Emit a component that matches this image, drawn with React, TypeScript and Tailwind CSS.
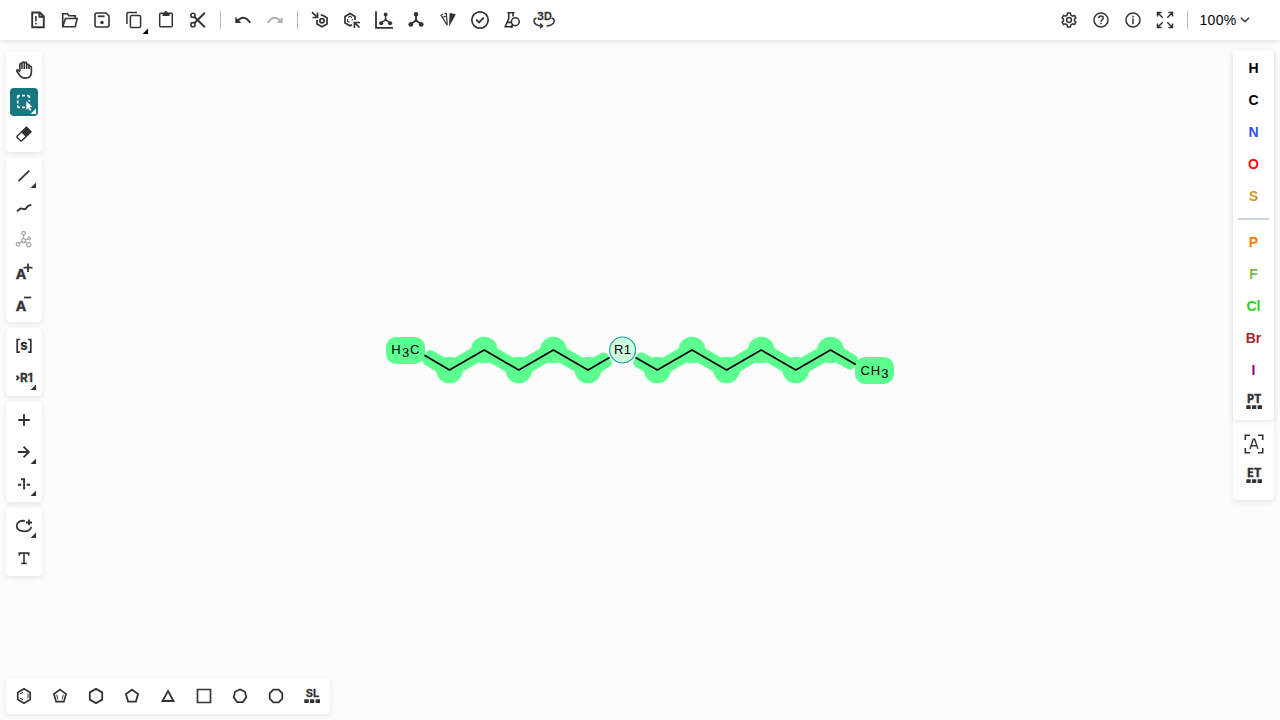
import React from "react";

const ink = "#333333";

function Icon({ children, size = 24, w = 1.6, color = ink }: { children: React.ReactNode; size?: number; w?: number; color?: string }) {
  return (
    <svg width={size} height={size} viewBox="0 0 24 24" fill="none" stroke={color} strokeWidth={w} className="block shrink-0 overflow-visible">
      {children}
    </svg>
  );
}

function Glyph({ x, y, size, children, weight = 700, font = "Inter, sans-serif", length }: { x: number; y: number; size: number; children: string; weight?: number; font?: string; length?: number }) {
  return (
    <text x={x} y={y} fontSize={size} fontWeight={weight} fontFamily={font} textAnchor="middle" fill={ink} stroke={ink} strokeWidth="0.3" textLength={length} lengthAdjust="spacingAndGlyphs">
      {children}
    </text>
  );
}

function Tool({ children, more, active, label }: { children: React.ReactNode; more?: "dark" | "light" | "black"; active?: boolean; label: string }) {
  return (
    <button aria-label={label} className={`relative flex size-7 shrink-0 items-center justify-center rounded-[4px] ${active ? "bg-[#167782]" : ""}`}>
      {children}
      {more && (
        <svg width="6" height="6" viewBox="0 0 6 6" className={more === "black" ? "absolute right-0 bottom-0" : "absolute right-[2px] bottom-[2px]"}>
          <path d="M6 .5V6H.5Z" fill={more === "light" ? "#fff" : more === "black" ? "#000" : ink} />
        </svg>
      )}
    </button>
  );
}

function Panel({ children, className = "" }: { children: React.ReactNode; className?: string }) {
  return <div className={`flex rounded-[4px] bg-white p-1 shadow-[0_2px_5px_rgba(103,104,132,0.15)] ${className}`}>{children}</div>;
}

const Sep = () => <div className="h-[18px] w-px bg-[#b4b9d6]" />;

const Molecule = () => (
  <>
    <path d="M12 6V12.5L6 16.5M12 12.5L18 16.5" strokeWidth="1.8" />
    <g fill={ink} stroke="none">
      <circle cx="12" cy="6.2" r="2.2" />
      <circle cx="6.8" cy="16.4" r="2.4" />
      <circle cx="17.2" cy="16.4" r="2.4" />
      <circle cx="12" cy="12.6" r="1.3" />
    </g>
  </>
);

const Dots = () => <path d="M4.3 15.2H8.7V19H4.3ZM9.9 15.2H14.3V19H9.9ZM15.6 15.2H20V19H15.6Z" fill={ink} stroke="none" />;

function TopBar() {
  return (
    <header className="relative z-10 flex h-10 shrink-0 items-center bg-white pl-6 shadow-[0_2px_5px_rgba(103,104,132,0.15)]">
      <div className="flex gap-1">
        <Tool label="New"><Icon w={1.9}><path d="M6.2 4.5H13.8L17.8 8.3V19.2H6.2ZM13.4 4.7V8.8H17.6" /><path d="M9.9 8V13.3M9.9 14.7V16.5" strokeWidth="1.6" /></Icon></Tool>
        <Tool label="Open"><Icon><path d="M4.7 18.5V5.8H9.5L11 7.7H17.2V10.5M4.8 18.8L7.4 10.5H19.2L17.2 18.8Z" /></Icon></Tool>
        <Tool label="Save"><Icon><path d="M5 7Q5 5 7 5H16L19 8V17Q19 19 17 19H7Q5 19 5 17Z" /><path d="M7.8 8.3H14.5" strokeWidth="1.8" /><circle cx="12" cy="14.5" r="1.7" fill={ink} stroke="none" /></Icon></Tool>
        <Tool label="Copy" more="black"><Icon w={1.5}><rect x="8.4" y="7.6" width="10.2" height="12" rx="1.4" /><path d="M4.9 16V6Q4.9 4.6 6.3 4.6H15" /></Icon></Tool>
        <Tool label="Paste"><Icon w={1.5}><rect x="5.7" y="5.3" width="12.6" height="13.5" rx="1" /><path d="M8.5 5H10.3Q10.3 3 12 3Q13.7 3 13.7 5H15.5V8H8.5Z" fill={ink} stroke="none" /></Icon></Tool>
        <Tool label="Cut"><Icon><circle cx="7" cy="7.3" r="2.1" /><circle cx="7" cy="16.7" r="2.1" /><path d="M8.5 9L18.9 19.2M8.5 15L18.9 4.8" strokeWidth="1.9" /></Icon></Tool>
      </div>
      <div className="ml-2 mr-2"><Sep /></div>
      <div className="flex gap-1">
        <Tool label="Undo"><Icon><path d="M5.5 14Q12.8 5.2 19.2 14.8" strokeWidth="1.9" /><path d="M4.3 8.7V15H10.4Z" fill={ink} stroke="none" /></Icon></Tool>
        <Tool label="Redo"><Icon color="#b0b0b0"><path d="M18.5 14Q11.2 5.2 4.8 14.8" strokeWidth="1.9" /><path d="M19.7 8.7V15H13.6Z" fill="#b0b0b0" stroke="none" /></Icon></Tool>
      </div>
      <div className="ml-2 mr-2"><Sep /></div>
      <div className="flex gap-1">
        <Tool label="Aromatize"><Icon w={1.7}><path d="M12.8 7.6L14 7L19 9.8V15.9L14 18.7L9 15.9V12" /><circle cx="14" cy="12.8" r="2.1" /><path d="M4 4.2L9 9M9.5 4.5V9.5H4.6" /></Icon></Tool>
        <Tool label="Dearomatize"><Icon w={1.7}><path d="M12 16.8L10 17.8L5 15V8.4L10 5.5L15 8.4V12" /><path d="M8 9.5L10 8.3L12 9.5M7.5 11V13.2L9.5 14.5M12.3 11V12.5" strokeWidth="1.1" /><path d="M19.5 19.5L14.8 14.8M14.4 20V14.5H20" /></Icon></Tool>
        <Tool label="Layout"><Icon><path d="M4 3.3V19.8H21" strokeWidth="1.8" /><g transform="translate(3.3 1.1) scale(.86)"><Molecule /></g></Icon></Tool>
        <Tool label="Clean Up"><Icon><Molecule /></Icon></Tool>
        <Tool label="Calculate CIP"><Icon><path d="M13 18.8L19.8 6.6Q17 5 13.6 5Z" fill={ink} stroke="none" /><path d="M11.2 17.2L5 7.2L7 6.2M8.5 5.6L10.4 5.4L11.2 17.2M6.6 9.2L10.5 8" strokeWidth="1.2" /></Icon></Tool>
        <Tool label="Check"><Icon><circle cx="12" cy="12" r="8.2" strokeWidth="1.7" /><path d="M8.2 11.7L11 14.4L15.8 9.6" strokeWidth="1.8" /></Icon></Tool>
        <Tool label="Calculated Values"><Icon><path d="M7.3 4.7H14.5M8.8 5V10.4L5.2 18.8H13M13 5V8.6M7.4 14.4H11" /><circle cx="15.3" cy="13.7" r="3.9" /><path d="M12.8 17L10.6 19.5" strokeWidth="2" /></Icon></Tool>
        <Tool label="3D Viewer"><Icon w={1.5}><Glyph x={12.4} y={12.3} size={10.7} length={14.8} weight={600}>3D</Glyph><path d="M4.5 10Q1.8 11 2 13.3Q2.7 17.5 10 18M19.7 10Q22.5 11 22.2 13.3Q21.3 17.2 14.5 18" strokeDasharray="30 1" /><path d="M8.2 15.6L10.6 18L8 20.3" /></Icon></Tool>
      </div>
      <div className="ml-auto flex items-center gap-1">
        <Tool label="Settings"><Icon w={1.5}><path d="M10.6 5.1H13.4L13.8 7.1L15.6 8.1L17.5 7.5L18.9 9.9L17.5 11.1V12.9L18.9 14.1L17.5 16.5L15.6 15.9L13.8 16.9L13.4 18.9H10.6L10.2 16.9L8.4 15.9L6.5 16.5L5.1 14.1L6.5 12.9V11.1L5.1 9.9L6.5 7.5L8.4 8.1L10.2 7.1Z" /><circle cx="12" cy="12" r="2.4" /></Icon></Tool>
        <Tool label="Help"><Icon w={1.5}><circle cx="12" cy="12" r="7" /><path d="M9.8 10.3Q9.8 8 12 8Q14.2 8 14.2 10Q14.2 11.2 13 11.9Q12 12.5 12 13.8M12 14.8V16.2" /></Icon></Tool>
        <Tool label="About"><Icon w={1.5}><circle cx="12" cy="12" r="7" /><path d="M12 10.4V16.2M12 7.8V9.4" /></Icon></Tool>
        <Tool label="Fullscreen"><Icon w={1.5}><path d="M9.7 9.7L4.8 4.8M14.3 9.7L19.2 4.8M9.7 14.3L4.8 19.2M14.3 14.3L19.2 19.2M4.5 8.6V4.5H8.6M15.4 4.5H19.5V8.6M4.5 15.4V19.5H8.6M15.4 19.5H19.5V15.4" /></Icon></Tool>
      </div>
      <div className="ml-2"><Sep /></div>
      <button className="ml-[11px] flex w-[81px] items-center gap-[3px] font-['Liberation_Sans',sans-serif] text-[14px] text-black">
        <span className="whitespace-nowrap pl-[0.5px] tracking-[0.3px]">100%</span>
        <svg width="10" height="6" viewBox="0 0 10 6" fill="none" stroke={ink} strokeWidth="1.4"><path d="M.9 .7L5 4.8L9.1 .7" /></svg>
      </button>
    </header>
  );
}

function LeftTools() {
  return (
    <aside className="flex w-9 flex-col gap-1.5">
      <Panel className="flex-col gap-1">
        <Tool label="Hand"><Icon><path d="M7.8 13V6.6Q7.8 5.5 8.9 5.5Q9.9 5.5 9.9 6.6V11M9.9 11V5.4Q9.9 4.1 11.1 4.1Q12.3 4.1 12.3 5.4V11M12.3 11V5.5Q12.3 4.4 13.4 4.4Q14.7 4.4 14.7 5.6V11M14.7 11V7.3Q14.7 6.2 15.8 6.2Q17 6.2 17 7.3V11M17 8.6Q19.4 7.6 19.4 9.5V14Q19.3 20.1 13.5 20.1Q9.8 20.1 7.8 17.4L4.9 13.3Q4.5 12.5 5.2 11.9Q6 11.4 7.8 14" /></Icon></Tool>
        <Tool label="Select" active more="light"><Icon color="#fff"><path d="M5.7 8.4V6.7Q5.7 5.7 6.7 5.7H8M10 5.7H13M15 5.7H16.2Q17.3 5.7 17.3 6.7V8M17.3 10V11.5M5.7 10.5V13.5M5.7 15.3V16.3Q5.7 17.3 6.7 17.3H8M10 17.3H13" strokeWidth="1.7" /><path d="M14.3 11.2V20L16.2 18L17.8 21L19.4 20L17.8 17.3L20.2 16.8Z" fill="#fff" stroke="none" /></Icon></Tool>
        <Tool label="Erase"><Icon><path d="M14.4 5.3L19 9.8L9.8 18.8H8.4L5 15.3V14.2Z" strokeWidth="1.4" strokeLinejoin="round" /><path d="M14.4 4.5L19.7 9.8L14.2 15.2L8.9 9.9Z" fill={ink} stroke="none" /></Icon></Tool>
      </Panel>
      <Panel className="flex-col gap-1">
        <Tool label="Bond" more="dark"><Icon w={1.7}><path d="M6.5 17.2L17.3 6.7" /></Icon></Tool>
        <Tool label="Chain"><Icon w={1.9}><path d="M5 15.3L8.5 12.4L13.2 13.2L16.2 9.8L19.3 8.9" /></Icon></Tool>
        <Tool label="Charge Pair"><Icon color="#aaa" w={1.3}><circle cx="11.6" cy="5" r="1.7" /><circle cx="11.6" cy="12.6" r="1.9" /><circle cx="6" cy="16.3" r="1.8" /><circle cx="16.7" cy="16.8" r="2.1" /><circle cx="17" cy="10.5" r="1.3" /><path d="M11.6 7V10.6M9.8 13.6L7.5 15M13.2 13.8L15 15.4M13.5 12L15.6 11" /></Icon></Tool>
        <Tool label="Charge Plus"><Icon><Glyph x={8.9} y={18.9} size={13.6} length={10} font="'Noto Sans', sans-serif">A</Glyph><path d="M16 3.5V12M11.5 7.7H20.5" strokeWidth="1.8" /></Icon></Tool>
        <Tool label="Charge Minus"><Icon><Glyph x={8.9} y={18.9} size={13.6} length={10} font="'Noto Sans', sans-serif">A</Glyph><path d="M12 5.5H19.3" strokeWidth="1.7" /></Icon></Tool>
      </Panel>
      <Panel className="flex-col gap-1">
        <Tool label="S-Group"><Icon w={1.7}><path d="M8 5.5H5.2V18.2H8M16 5.5H18.8V18.2H16" /><Glyph x={12} y={15.8} size={13}>s</Glyph></Icon></Tool>
        <Tool label="R-Group" more="dark"><Icon><path d="M4.4 9.6L6.7 11.8L4.4 14" strokeWidth="1.8" /><Glyph x={14.5} y={16.1} size={12} length={12.8}>R1</Glyph></Icon></Tool>
      </Panel>
      <Panel className="flex-col gap-1">
        <Tool label="Reaction Plus"><Icon w={1.9}><path d="M12 6.3V17.7M6.3 12H17.7" /></Icon></Tool>
        <Tool label="Reaction Arrow" more="dark"><Icon w={1.8}><path d="M5.8 12H16.7M11.5 6.6L16.9 12L11.5 17.4" /></Icon></Tool>
        <Tool label="Reaction Mapping" more="dark"><Icon w={1.9}><path d="M6 12.8H9.3M14.6 12.8H18M9 7.2H12.1V17.5" /></Icon></Tool>
      </Panel>
      <Panel className="flex-col gap-1">
        <Tool label="Shape" more="dark"><Icon w={1.8}><path d="M13 6.9C7.5 6.2 4.7 8.6 4.7 12C4.7 19 19.4 18.8 19.1 12.8M17 5.5V11.3M14 8.5H20" /></Icon></Tool>
        <Tool label="Text"><Icon><path d="M7.3 9.7V7.1H16.7V9.7M12 7.1V17.4M9.3 17.4H14.7" strokeWidth="1.6" /></Icon></Tool>
      </Panel>
    </aside>
  );
}

function Atom({ color, children }: { color: string; children: string }) {
  return (
    <button className={`flex size-7 shrink-0 items-center justify-center font-['Liberation_Sans',sans-serif] text-[14px] leading-none font-bold ${color}`}>
      {children}
    </button>
  );
}

function RightTools() {
  return (
    <aside className="ml-auto -mt-0.5 flex h-[450px] w-[41px] flex-col rounded-[4px] bg-white shadow-[0_2px_5px_rgba(103,104,132,0.15)]">
      <Panel className="h-[370px] flex-col items-center gap-1">
        <Atom color="text-black">H</Atom>
        <Atom color="text-black">C</Atom>
        <Atom color="text-[#304ff7]">N</Atom>
        <Atom color="text-[#ff0d0d]">O</Atom>
        <Atom color="text-[#c99a19]">S</Atom>
        <div className="my-1 h-0.5 w-[31px] shrink-0 bg-[#cad3dd]" />
        <Atom color="text-[#ff8000]">P</Atom>
        <Atom color="text-[#78bc42]">F</Atom>
        <Atom color="text-[#1fd01f]">Cl</Atom>
        <Atom color="text-[#a62929]">Br</Atom>
        <Atom color="text-[#940094]">I</Atom>
        <Tool label="Periodic Table"><Icon><Glyph x={12} y={13.4} size={11.5} length={14.5} font="'Noto Sans', sans-serif">PT</Glyph><Dots /></Icon></Tool>
      </Panel>
      <div className="flex flex-col items-center gap-1 pt-2.5">
        <Tool label="Any Atom"><Icon><path d="M3.3 8V3.3H8M16 3.3H20.7V8M3.3 16V20.7H8M16 20.7H20.7V16" /><path d="M8 17L11.3 7.3H12.7L16 17M9.3 13.8H14.7" strokeWidth="1.4" /></Icon></Tool>
        <Tool label="Extended Table"><Icon><Glyph x={12} y={13.4} size={11.5} length={14.5} font="'Noto Sans', sans-serif">ET</Glyph><Dots /></Icon></Tool>
      </div>
    </aside>
  );
}

function Structure() {
  const left = "M424.5 355.2L449.5 370L484.2 350L518.8 370L553.4 350L588 370L609.5 357.5";
  const right = "M635.5 357.5L657.3 370L692 350L726.6 370L761.2 350L795.8 370L830.5 350L855.8 364.6";
  return (
    <svg width="1280" height="720" viewBox="0 0 1280 720" className="pointer-events-none absolute inset-0" fontFamily="'Liberation Sans', sans-serif" fontSize="13">
      <g fill="#5cff8f" stroke="none">
        {[449.5, 518.8, 588, 657.3, 726.6, 795.8].map((x) => <circle key={x} cx={x} cy="370" r="13.3" />)}
        {[484.2, 553.4, 692, 761.2, 830.5].map((x) => <circle key={x} cx={x} cy="350" r="13.3" />)}
        <rect x="386" y="337" width="39" height="27" rx="10" />
        <rect x="855" y="357" width="39" height="27" rx="10" />
        <rect y="-8" width="25" height="16" rx="5" transform="translate(424.5 355.2) rotate(30)" />
        <rect y="-8" width="25" height="16" rx="5" transform="translate(609.5 357.5) rotate(150)" />
        <rect y="-8" width="25" height="16" rx="5" transform="translate(635.5 357.5) rotate(30)" />
        <rect y="-8" width="25" height="16" rx="5" transform="translate(855.8 364.6) rotate(210)" />
      </g>
      <g fill="none" stroke="#5cff8f" strokeWidth="16" strokeLinejoin="round">
        <path d="M436 362L449.5 370L484.2 350L518.8 370L553.4 350L588 370L600 363" />
        <path d="M645 363L657.3 370L692 350L726.6 370L761.2 350L795.8 370L830.5 350L845 358.4" />
      </g>
      <g fill="none" stroke="#000" strokeWidth="1.7" strokeLinejoin="round"><path d={left} /><path d={right} /></g>
      <circle cx="622.6" cy="350" r="13" fill="#cdffdd" stroke="#219ba5" strokeWidth="1.2" />
      <g fill="#000">
        <text x="391.3" y="354">H</text><text x="402" y="357">3</text><text x="410" y="354">C</text>
        <text x="614" y="354" letterSpacing=".3">R1</text>
        <text x="860.5" y="375">C</text><text x="870.7" y="375">H</text><text x="881.2" y="378">3</text>
      </g>
    </svg>
  );
}

function BottomTools() {
  return (
    <Panel className="mt-auto mb-1.5 ml-1.5 w-[324px] gap-2">
      <Tool label="Benzene"><Icon w={1.7}><path d="M12 4.8L18.2 8.4V15.6L12 19.2L5.8 15.6V8.4Z" /><path d="M7.9 10L11.2 8M16 9.4V14.4M7.9 14L11.2 16" strokeWidth="1" /></Icon></Tool>
      <Tool label="Cyclopentadiene"><Icon w={1.7}><path d="M12 5.6L18.1 10.1L15.9 17.6H8.1L5.9 10.1Z" /><path d="M8.7 10.8L9.8 15.4M15.3 10.8L14.2 15.4" strokeWidth="1" /></Icon></Tool>
      <Tool label="Cyclohexane"><Icon w={1.8}><path d="M12 4.9L18.2 8.4V15.6L12 19.1L5.8 15.6V8.4Z" /></Icon></Tool>
      <Tool label="Cyclopentane"><Icon w={1.8}><path d="M12 5.7L18.1 10.1L15.9 17.6H8.1L5.9 10.1Z" /></Icon></Tool>
      <Tool label="Cyclopropane"><Icon w={1.8}><path d="M12 7L17.5 17H6.5Z" /></Icon></Tool>
      <Tool label="Cyclobutane"><Icon w={1.7}><path d="M5.5 5.5H18.5V18.5H5.5Z" /></Icon></Tool>
      <Tool label="Cycloheptane"><Icon w={1.8}><path d="M12 5.4L17 7.8L18.3 13.2L14.8 18.1H9.2L5.7 13.2L7 7.8Z" /></Icon></Tool>
      <Tool label="Cyclooctane"><Icon w={1.8}><path d="M9.3 5.7H14.7L18.3 9.3V14.7L14.7 18.3H9.3L5.7 14.7V9.3Z" /></Icon></Tool>
      <Tool label="Structure Library"><Icon><Glyph x={12.4} y={12.7} size={10.8} length={13.5}>SL</Glyph><Dots /></Icon></Tool>
    </Panel>
  );
}

export default function App() {
  return (
    <div className="relative flex h-screen w-full flex-col overflow-hidden bg-[#fcfcfc]">
      <TopBar />
      <main className="flex px-1.5 pt-3">
        <LeftTools />
        <RightTools />
      </main>
      <Structure />
      <BottomTools />
    </div>
  );
}
